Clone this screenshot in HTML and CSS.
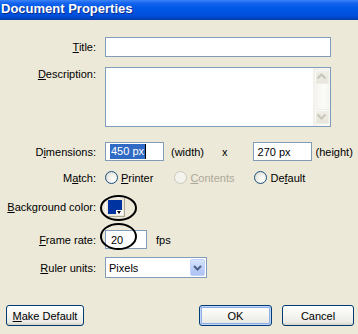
FILE: index.html
```html
<!DOCTYPE html>
<html>
<head>
<meta charset="utf-8">
<link rel="stylesheet" href="styles.css">
</head>
<body>
<div class="dialog">
  <div class="titlebar"><span class="title">Document Properties</span></div>
  <div class="content">
    <div class="row r-title">
      <div class="label"><u>T</u>itle:</div>
      <div class="input title-input"></div>
    </div>
    <div class="row r-desc">
      <div class="label label-top"><u>D</u>escription:</div>
      <div class="textarea">
        <div class="scrollbar">
          <div class="sbtn"><svg width="15" height="15" viewBox="0 0 15 15"><polyline points="3.5,9.5 7.5,5.5 11.5,9.5" fill="none" stroke="#c8c6b8" stroke-width="2"/></svg></div>
          <div class="strack"></div>
          <div class="sbtn"><svg width="15" height="15" viewBox="0 0 15 15"><polyline points="3.5,5.5 7.5,9.5 11.5,5.5" fill="none" stroke="#c8c6b8" stroke-width="2"/></svg></div>
        </div>
      </div>
    </div>
    <div class="row r-dim">
      <div class="label">D<u>i</u>mensions:</div>
      <div class="input dim-input"><span class="sel">450 px</span><span class="caret"></span></div>
      <span class="unit-w">(width)</span>
      <span class="times">x</span>
      <div class="input dim-input dim-h">270 px</div>
      <span class="unit-h">(height)</span>
    </div>
    <div class="row r-match">
      <div class="label">M<u>a</u>tch:</div>
      <span class="radio"></span><span class="rtext"><u>P</u>rinter</span>
      <span class="radio disabled r2"></span><span class="rtext disabled-text"><u>C</u>ontents</span>
      <span class="radio r3"></span><span class="rtext">De<u>f</u>ault</span>
    </div>
    <div class="row r-bg">
      <div class="label"><u>B</u>ackground color:</div>
      <div class="swatch"><div class="swatch-fill"></div><div class="swatch-arrow"></div></div>
    </div>
    <div class="row r-fps">
      <div class="label"><u>F</u>rame rate:</div>
      <div class="input fps-input">20</div>
      <span class="fps">fps</span>
    </div>
    <div class="row r-ruler">
      <div class="label"><u>R</u>uler units:</div>
      <div class="select">
        <span class="sel-text">Pixels</span>
        <div class="dd"><svg width="15" height="17" viewBox="0 0 15 17"><polyline points="4,7 7.5,10.5 11,7" fill="none" stroke="#4d6185" stroke-width="2"/></svg></div>
      </div>
    </div>
    <div class="buttons">
      <div class="btn btn-make"><u>M</u>ake Default</div>
      <div class="spacer"></div>
      <div class="btn btn-ok">OK</div>
      <div class="btn btn-cancel">Cancel</div>
    </div>
  </div>
  <div class="ellipse e1"></div>
  <div class="ellipse e2"></div>
</div>
</body>
</html>
```
FILE: styles.css
```css
html, body {
  margin: 0;
  padding: 0;
}
body {
  width: 358px;
  height: 334px;
  overflow: hidden;
  background: #ece9d8;
  font-family: "Liberation Sans", Arial, sans-serif;
  font-size: 11px;
  color: #000;
}
.dialog {
  position: relative;
  width: 358px;
  height: 334px;
}
.titlebar {
  height: 20px;
  background: linear-gradient(#3d84f5 0, #1464ef 3px, #0058e6 8px, #0050dc 15px, #0046c8 18px, #00389e 20px);
  display: flex;
  align-items: center;
}
.title {
  color: #fff;
  font-weight: bold;
  font-size: 13px;
  margin-left: 1px;
  margin-top: -3px;
  text-shadow: 1px 1px 0 #0a2a8a;
}
.content {
  display: flex;
  flex-direction: column;
}
.row {
  display: flex;
  align-items: center;
}
.label {
  width: 96px;
  text-align: right;
  margin-right: 9px;
  flex: none;
  white-space: nowrap;
}
.label-top {
  align-self: flex-start;
  margin-top: 1px;
}
.input {
  box-sizing: border-box;
  border: 1px solid #7f9db9;
  background: #fff;
  height: 20px;
  display: flex;
  align-items: center;
  padding-left: 5px;
}
.r-title { margin-top: 17px; }
.title-input { width: 226px; }
.r-desc { margin-top: 10px; }
.textarea {
  box-sizing: border-box;
  width: 226px;
  height: 60px;
  border: 1px solid #7f9db9;
  background: #fff;
  display: flex;
  justify-content: flex-end;
}
.scrollbar {
  width: 17px;
  display: flex;
  flex-direction: column;
  padding: 1px 1px 2px 1px;
  box-sizing: border-box;
  background: linear-gradient(90deg, #f3f1ec, #fbfbf8 60%, #f6f5f0);
}
.sbtn {
  width: 15px;
  height: 15px;
  box-sizing: border-box;
  border: 1px solid #efeee7;
  border-radius: 2px;
  background: linear-gradient(#f0efe9, #e8e6dc);
  box-shadow: inset 1px 1px 0 #fbfbf8;
}
.sbtn svg { display: block; margin: -1px; }
.strack { flex: 1; }
.r-dim { margin-top: 15px; }
.dim-input {
  width: 59px;
  height: 19px;
  padding-left: 4px;
}
.sel {
  background: #316ac5;
  color: #fff;
  padding: 1px 1px;
  line-height: 13px;
}
.caret {
  width: 1px;
  height: 15px;
  background: #000;
}
.unit-w { margin-left: 7px; }
.times { margin-left: 18px; }
.dim-h { margin-left: 25px; }
.unit-h { margin-left: 4px; }
.r-match { margin-top: 10px; height: 13px; }
.radio {
  box-sizing: border-box;
  width: 13px;
  height: 13px;
  border-radius: 50%;
  border: 1px solid #1c5180;
  background: radial-gradient(circle at 65% 65%, #fff 0, #f2f1ec 40%, #d5d4cc 100%);
  flex: none;
}
.radio.disabled {
  border-color: #cac8bb;
  background: #f4f3ee;
}
.rtext { margin-left: 3px; }
.disabled-text { color: #aca899; }
.r2 { margin-left: 21px; }
.r3 { margin-left: 20px; }
.r-bg { margin-top: 13px; }
.swatch {
  box-sizing: border-box;
  width: 20px;
  height: 20px;
  border: 1px solid #fff;
  border-right-color: #aca899;
  border-bottom-color: #aca899;
  background: #ece9d8;
  position: relative;
  padding: 2px;
}
.swatch-fill {
  width: 14px;
  height: 14px;
  background: #0033a0;
}
.swatch-arrow {
  position: absolute;
  right: 1px;
  bottom: 1px;
  width: 7px;
  height: 5px;
  background: #fff;
}
.swatch-arrow::after {
  content: "";
  position: absolute;
  left: 1px;
  top: 1px;
  border-left: 2.5px solid transparent;
  border-right: 2.5px solid transparent;
  border-top: 3px solid #000;
}
.r-fps { margin-top: 13px; }
.fps-input {
  width: 42px;
  height: 19px;
}
.fps { margin-left: 9px; }
.r-ruler { margin-top: 8px; }
.select {
  box-sizing: border-box;
  width: 102px;
  height: 21px;
  border: 1px solid #7f9db9;
  background: #fff;
  display: flex;
  align-items: center;
  padding: 1px;
}
.sel-text { flex: 1; padding-left: 2px; }
.dd {
  width: 15px;
  height: 17px;
  box-sizing: border-box;
  border-radius: 2px;
  background: linear-gradient(#d7e4fc, #b9cdf7 60%, #adc3f4);
  border: 1px solid #c3d3fd;
}
.dd svg { display: block; margin: -1px; }
.buttons {
  display: flex;
  margin-top: 27px;
  padding-left: 6px;
  padding-right: 4px;
}
.spacer { flex: 1; }
.btn {
  box-sizing: border-box;
  height: 21px;
  border: 1px solid #003c74;
  border-radius: 3px;
  background: linear-gradient(#ffffff, #f4f4f0 50%, #ecebe6 85%, #d6d0c5);
  display: flex;
  align-items: center;
  justify-content: center;
}
.btn-make { width: 78px; }
.btn-ok {
  width: 73px;
  box-shadow: inset 0 0 0 1px #c2d4f7, inset 0 0 0 2px #8caee9;
}
.btn-cancel { width: 72px; margin-left: 10px; }
.ellipse {
  position: absolute;
  box-sizing: border-box;
  border: 2px solid #000;
  border-radius: 50%;
}
.e1 { left: 100px; top: 195px; width: 37px; height: 26px; }
.e2 { left: 100px; top: 223px; width: 37px; height: 27px; }
```
